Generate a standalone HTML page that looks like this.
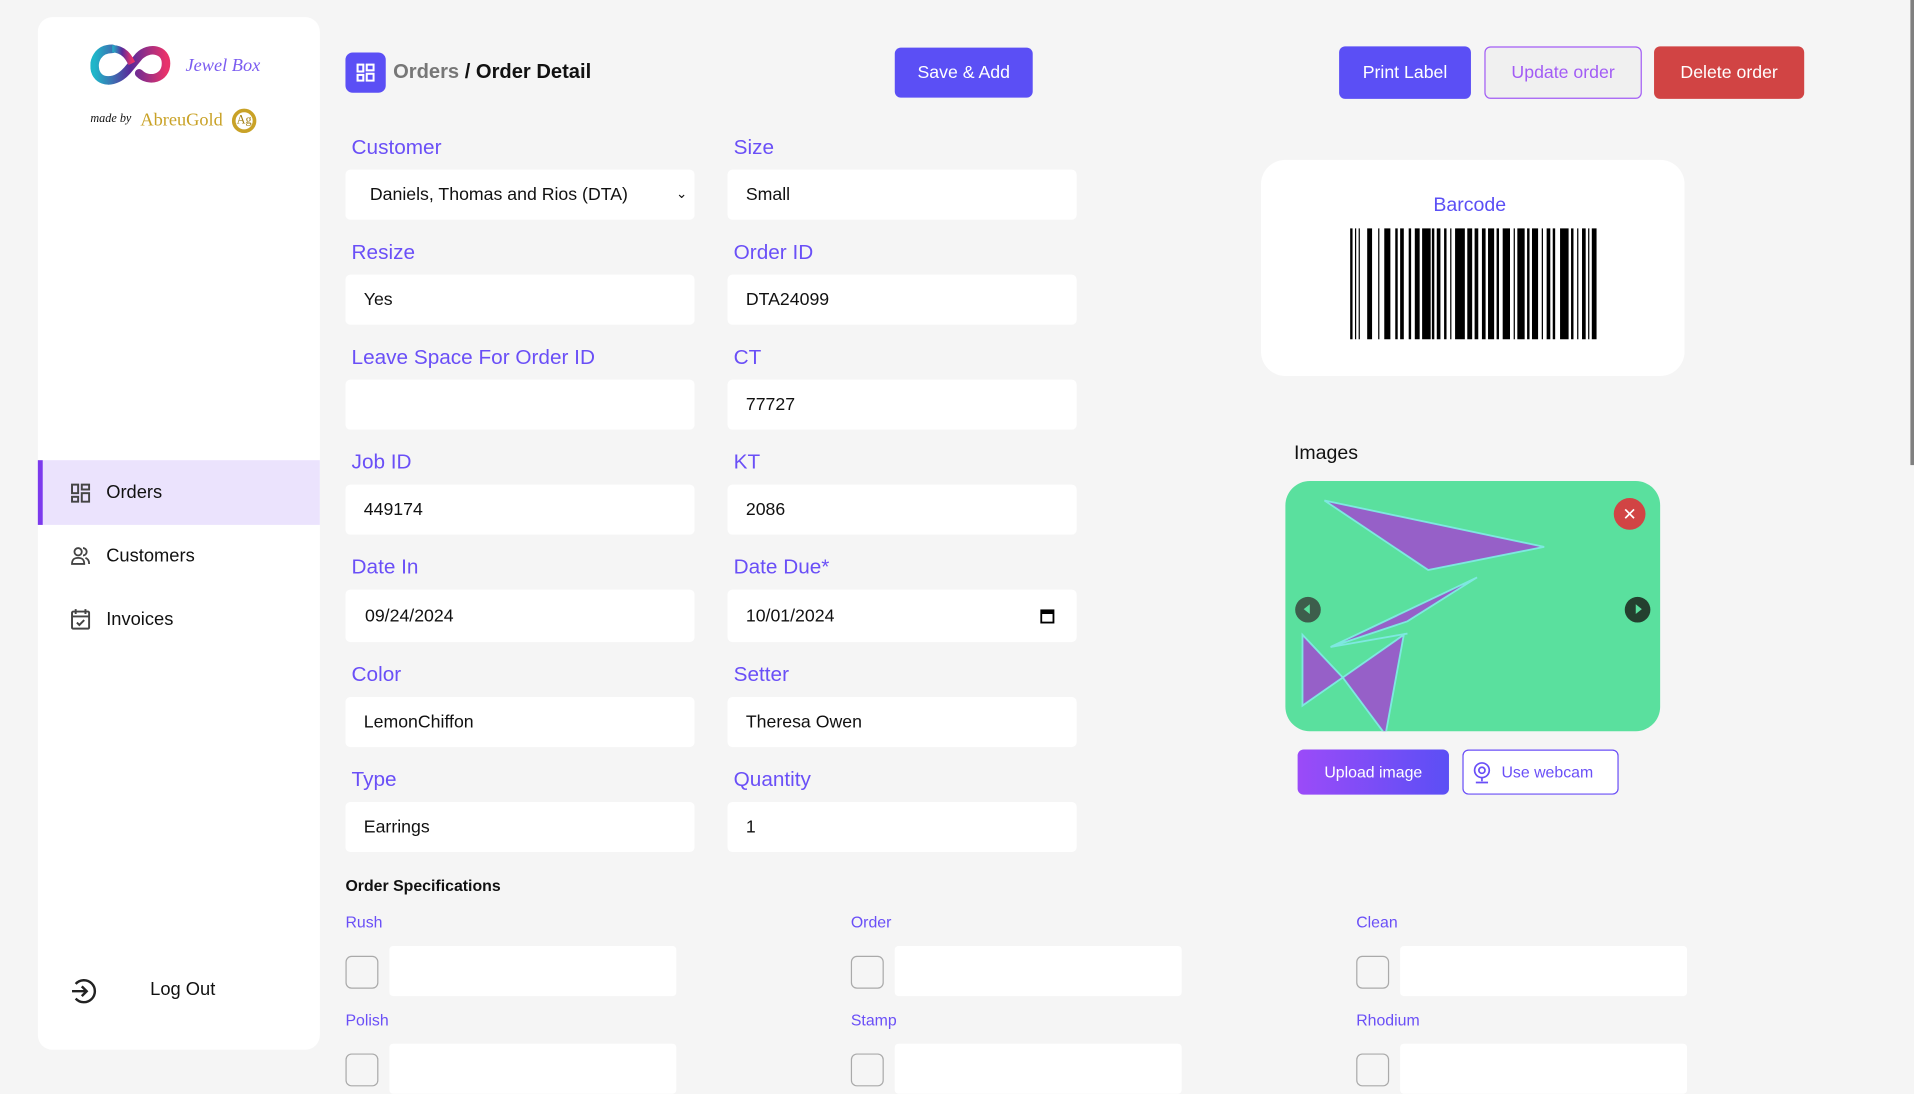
<!DOCTYPE html>
<html><head><meta charset="utf-8">
<style>
html,body{margin:0;padding:0;width:1914px;height:1083px;overflow:hidden;background:#f5f5f5;}
#root{position:absolute;left:0;top:0;width:1568px;height:887px;transform:scale(1.2207);transform-origin:0 0;font-family:"Liberation Sans",sans-serif;color:#111;}
.a{position:absolute;}
.side{left:31px;top:14px;width:231px;height:846px;background:#fff;border-radius:12px;}
.nav{left:31px;width:231px;height:52px;display:flex;align-items:center;font-size:15px;}
.nav svg{margin-left:27px;margin-right:13px;}
.lbl{font-size:17px;color:#6a4ff7;}
.inp{background:#fff;border-radius:4px;height:41px;width:286px;display:flex;align-items:center;font-size:14.5px;box-sizing:border-box;padding-left:15px;}
.btn{display:flex;align-items:center;justify-content:center;border-radius:5px;font-size:14.5px;color:#fff;box-sizing:border-box;}
.sl{font-size:13px;color:#6a4ff7;}
.cb{width:27px;height:27px;border:1px solid #aaa;border-radius:5px;box-sizing:border-box;background:#f5f5f5;}
.si{width:235px;height:41px;background:#fff;border-radius:3px;}
</style></head><body><div id="root">
<div class="a side"></div>
<svg class="a" style="left:74px;top:36px" width="68" height="36" viewBox="0 0 68 36">
<defs><linearGradient id="lg" x1="0" x2="1"><stop offset="0" stop-color="#1fb6c9"/><stop offset=".5" stop-color="#5a2a9a"/><stop offset="1" stop-color="#e8336b"/></linearGradient></defs>
<path d="M18 4C6 4 2 14 4 22 7 32 20 33 30 22L40 10C48 2 62 4 62 16 62 28 48 32 40 24" fill="none" stroke="url(#lg)" stroke-width="7" stroke-linecap="round"/>
<path d="M18 4C28 4 32 12 34 16" fill="none" stroke="url(#lg)" stroke-width="6"/>
</svg>
<div class="a" style="left:152px;top:46px;font-family:'Liberation Serif',serif;font-style:italic;font-size:15px;color:#7b5cf0;">Jewel Box</div>
<div class="a" style="left:74px;top:92px;font-family:'Liberation Serif',serif;font-style:italic;font-size:10px;">made by</div>
<div class="a" style="left:115px;top:91px;font-family:'Liberation Serif',serif;font-size:15px;color:#c9a227;">AbreuGold</div>
<div class="a" style="left:190px;top:89px;width:20px;height:20px;border-radius:50%;border:3px solid #c9a227;box-sizing:border-box;font-size:10px;color:#a07d10;text-align:center;line-height:14px;font-family:'Liberation Serif',serif;">Ag</div>

<div class="a nav" style="top:377px;height:53px;background:#ebe3fd;"><div class="a" style="left:0;top:0;width:4px;height:53px;background:#7c3aed"></div>
<svg width="16" height="16" viewBox="0 0 16 16" fill="none" stroke="#444" stroke-width="1.6"><rect x="1" y="1" width="5" height="7"/><rect x="1" y="11" width="5" height="4"/><rect x="9" y="1" width="6" height="4"/><rect x="9" y="8" width="6" height="7"/></svg>Orders</div>
<div class="a nav" style="top:429px;"><svg width="16" height="16" viewBox="0 0 16 16" fill="none" stroke="#444" stroke-width="1.5"><circle cx="6" cy="5" r="3"/><path d="M1 15c0-4 2-5 5-5s5 1 5 5z"/><path d="M10 2a3 3 0 0 1 0 6M12 10c2 1 3 2 3 5"/></svg>Customers</div>
<div class="a nav" style="top:481px;"><svg width="16" height="18" viewBox="0 0 16 18" fill="none" stroke="#444" stroke-width="1.6"><rect x="1" y="3" width="14" height="14" rx="1"/><path d="M1 7h14M4 1v4M12 1v4M5 12l2 2 4-4"/></svg>Invoices</div>
<svg class="a" style="left:57px;top:800px" width="24" height="24" viewBox="0 0 24 24" fill="none" stroke="#222" stroke-width="2"><path d="M5 6a9 9 0 1 1 0 12"/><path d="M2 12h12M10 8l4 4-4 4"/></svg>
<div class="a" style="left:123px;top:802px;font-size:15px;">Log Out</div>

<div class="a" style="left:283px;top:43px;width:33px;height:33px;background:#5b4ff5;border-radius:6px;"></div>
<svg class="a" style="left:292px;top:52px" width="15" height="15" viewBox="0 0 16 16" fill="none" stroke="#fff" stroke-width="1.8"><rect x="1" y="1" width="5" height="6"/><rect x="1" y="10" width="5" height="5"/><rect x="9" y="1" width="6" height="5"/><rect x="9" y="9" width="6" height="6"/></svg>
<div class="a" style="left:322px;top:50px;font-size:16.5px;font-weight:bold;"><span style="color:#777">Orders</span> / Order Detail</div>
<div class="a btn" style="left:733px;top:39px;width:113px;height:41px;background:#5b4ff5;">Save &amp; Add</div>
<div class="a btn" style="left:1097px;top:38px;width:108px;height:43px;background:#5b4ff5;">Print Label</div>
<div class="a btn" style="left:1216px;top:38px;width:129px;height:43px;background:#f0f0f0;border:1px solid #a25cf5;color:#a25cf5;">Update order</div>
<div class="a btn" style="left:1355px;top:38px;width:123px;height:43px;background:#d14444;">Delete order</div>

<div class="a lbl" style="left:288px;top:111px">Customer</div>
<div class="a inp" style="left:283px;top:139px;padding-left:20px;">Daniels, Thomas and Rios (DTA)<span style="position:absolute;right:6px;top:13px;font-size:11px">&#8964;</span></div>
<div class="a lbl" style="left:601px;top:111px">Size</div>
<div class="a inp" style="left:596px;top:139px;">Small</div>

<div class="a lbl" style="left:288px;top:197px">Resize</div>
<div class="a inp" style="left:283px;top:225px;">Yes</div>
<div class="a lbl" style="left:601px;top:197px">Order ID</div>
<div class="a inp" style="left:596px;top:225px;">DTA24099</div>

<div class="a lbl" style="left:288px;top:283px">Leave Space For Order ID</div>
<div class="a inp" style="left:283px;top:311px;"></div>
<div class="a lbl" style="left:601px;top:283px">CT</div>
<div class="a inp" style="left:596px;top:311px;">77727</div>

<div class="a lbl" style="left:288px;top:369px">Job ID</div>
<div class="a inp" style="left:283px;top:397px;">449174</div>
<div class="a lbl" style="left:601px;top:369px">KT</div>
<div class="a inp" style="left:596px;top:397px;">2086</div>

<div class="a lbl" style="left:288px;top:455px">Date In</div>
<div class="a inp" style="left:283px;top:483px;height:43px;padding-left:16px;">09/24/2024</div>
<div class="a lbl" style="left:601px;top:455px">Date Due*</div>
<div class="a inp" style="left:596px;top:483px;height:43px;">10/01/2024
<svg style="position:absolute;right:18px;top:15px" width="12" height="13" viewBox="0 0 12 13"><rect x="1" y="2" width="10" height="10" fill="none" stroke="#000" stroke-width="1.5"/><rect x="1" y="2" width="10" height="3"/></svg></div>

<div class="a lbl" style="left:288px;top:543px">Color</div>
<div class="a inp" style="left:283px;top:571px;">LemonChiffon</div>
<div class="a lbl" style="left:601px;top:543px">Setter</div>
<div class="a inp" style="left:596px;top:571px;">Theresa Owen</div>

<div class="a lbl" style="left:288px;top:629px">Type</div>
<div class="a inp" style="left:283px;top:657px;">Earrings</div>
<div class="a lbl" style="left:601px;top:629px">Quantity</div>
<div class="a inp" style="left:596px;top:657px;">1</div>

<div class="a" style="left:283px;top:718px;font-size:13px;font-weight:bold;">Order Specifications</div>
<div class="a sl" style="left:283px;top:748px">Rush</div>
<div class="a sl" style="left:697px;top:748px">Order</div>
<div class="a sl" style="left:1111px;top:748px">Clean</div>
<div class="a cb" style="left:283px;top:783px"></div><div class="a si" style="left:319px;top:775px"></div>
<div class="a cb" style="left:697px;top:783px"></div><div class="a si" style="left:733px;top:775px"></div>
<div class="a cb" style="left:1111px;top:783px"></div><div class="a si" style="left:1147px;top:775px"></div>
<div class="a sl" style="left:283px;top:828px">Polish</div>
<div class="a sl" style="left:697px;top:828px">Stamp</div>
<div class="a sl" style="left:1111px;top:828px">Rhodium</div>
<div class="a cb" style="left:283px;top:863px"></div><div class="a si" style="left:319px;top:855px"></div>
<div class="a cb" style="left:697px;top:863px"></div><div class="a si" style="left:733px;top:855px"></div>
<div class="a cb" style="left:1111px;top:863px"></div><div class="a si" style="left:1147px;top:855px"></div>

<div class="a" style="left:1033px;top:131px;width:347px;height:177px;background:#fff;border-radius:20px;"></div>
<div class="a" style="left:1033px;top:160px;width:342px;text-align:center;font-size:16px;color:#5b4ff5;">Barcode</div>
<svg class="a" style="left:1106px;top:187px" width="202" height="91" viewBox="0 0 202 91">
<g fill="#000">
<rect x="0" width="2" height="91"/><rect x="4" width="1" height="91"/><rect x="7" width="1" height="91"/><rect x="14" width="4" height="91"/><rect x="23" width="1" height="91"/><rect x="28" width="5" height="91"/><rect x="37" width="2" height="91"/><rect x="41" width="3" height="91"/><rect x="48" width="2" height="91"/><rect x="53" width="4" height="91"/><rect x="59" width="7" height="91"/><rect x="67" width="2" height="91"/><rect x="71" width="3" height="91"/><rect x="77" width="2" height="91"/><rect x="82" width="1" height="91"/><rect x="86" width="8" height="91"/><rect x="96" width="4" height="91"/><rect x="102" width="3" height="91"/><rect x="108" width="3" height="91"/><rect x="113" width="5" height="91"/><rect x="120" width="2" height="91"/><rect x="125" width="6" height="91"/><rect x="134" width="1" height="91"/><rect x="137" width="6" height="91"/><rect x="145" width="2" height="91"/><rect x="149" width="5" height="91"/><rect x="157" width="1" height="91"/><rect x="161" width="3" height="91"/><rect x="166" width="2" height="91"/><rect x="172" width="7" height="91"/><rect x="181" width="2" height="91"/><rect x="186" width="1" height="91"/><rect x="190" width="3" height="91"/><rect x="195" width="1" height="91"/><rect x="198" width="4" height="91"/>
</g></svg>

<div class="a" style="left:1060px;top:363px;font-size:16px;">Images</div>
<div class="a" style="left:1053px;top:394px;width:307px;height:205px;background:#5ae09e;border-radius:20px;overflow:hidden;">
<svg width="307" height="205" viewBox="0 0 307 205"><g fill="#9660c8" stroke="#7ee8e0" stroke-width="1.5">
<polygon points="32,16 212,54 117,73"/><polygon points="157,79 37,136 100,115"/><polygon points="14,126 14,184 47,161"/><polygon points="47,161 97,126 82,208"/></g>
<polyline points="37,136 100,125" fill="none" stroke="#7ee8e0" stroke-width="1.5"/></svg>
<div class="a" style="left:269px;top:14px;width:26px;height:26px;border-radius:50%;background:#d14444;color:#fff;text-align:center;line-height:26px;font-size:14px;">&#10005;</div>
<div class="a" style="left:8px;top:95px;width:21px;height:21px;border-radius:50%;background:#3d5e4c;"><div style="position:absolute;left:7px;top:6px;border-right:5px solid #5ae09e;border-top:4px solid transparent;border-bottom:4px solid transparent;"></div></div>
<div class="a" style="left:278px;top:95px;width:21px;height:21px;border-radius:50%;background:#24402f;"><div style="position:absolute;left:9px;top:6px;border-left:5px solid #5ae09e;border-top:4px solid transparent;border-bottom:4px solid transparent;"></div></div>
</div>
<div class="a btn" style="left:1063px;top:614px;width:124px;height:37px;background:linear-gradient(90deg,#9b4bf8,#5b4ff5);font-size:13px;">Upload image</div>
<div class="a btn" style="left:1198px;top:614px;width:128px;height:37px;background:#fff;border:1px solid #6a4ff7;color:#6a4ff7;font-size:13px;justify-content:flex-start;">
<svg style="margin:0 8px 0 7px" width="16" height="18" viewBox="0 0 16 18" fill="none" stroke="#6a4ff7" stroke-width="1.4"><circle cx="8" cy="7" r="6"/><circle cx="8" cy="7" r="2.5"/><path d="M8 13v3M3 17h10"/></svg>Use webcam</div>

<div class="a" style="left:1565px;top:0;width:3px;height:381px;background:#808080;"></div>
</div></body></html>
